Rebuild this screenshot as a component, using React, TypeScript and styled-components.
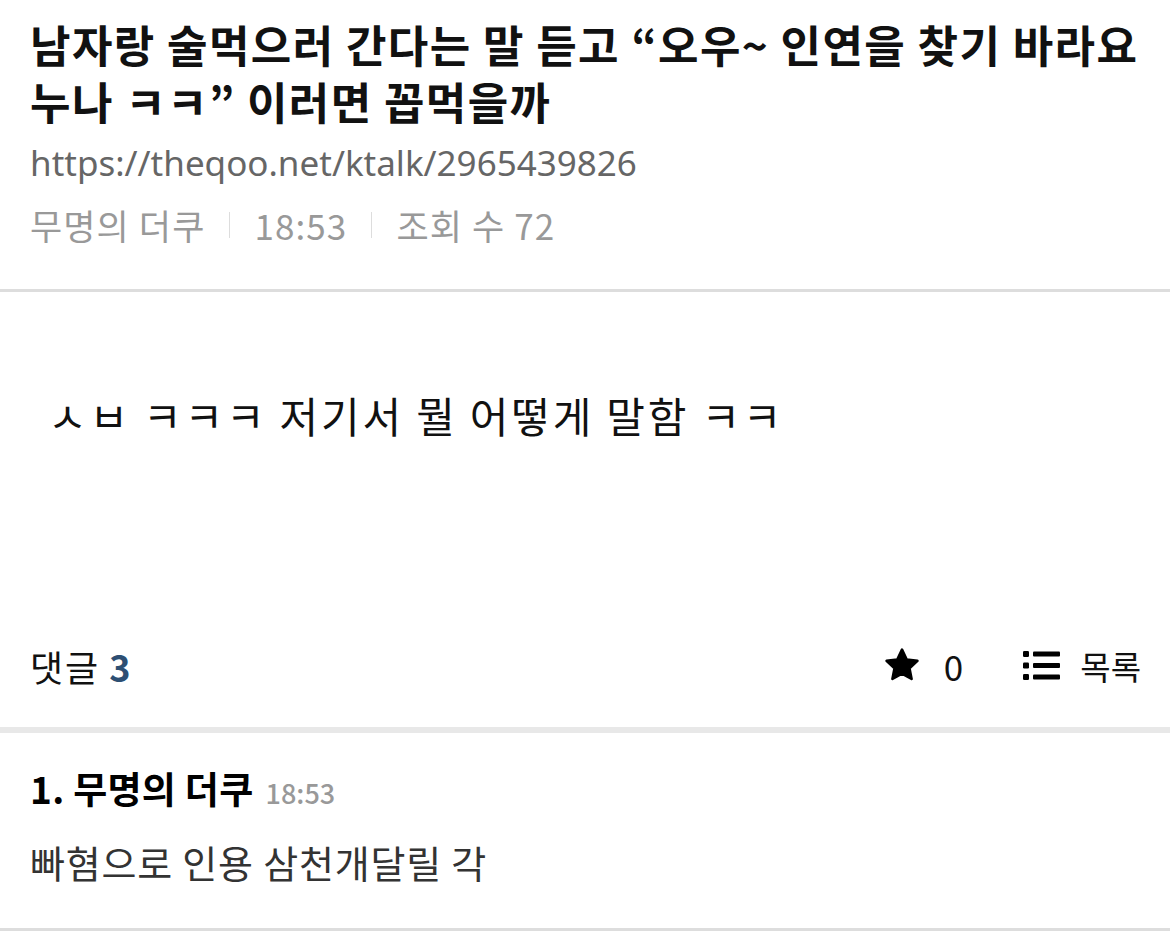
import React from "react";
import styled, { createGlobalStyle } from "styled-components";

const Global = createGlobalStyle`
  html, body { margin: 0; padding: 0; background: #fff; }
  body { font-family: "Noto Sans CJK KR", "Noto Sans", sans-serif; color: #000; }
  * { box-sizing: border-box; }
`;

const Page = styled.div`
  width: 1170px;
  background: #fff;
`;

const Header = styled.header`
  padding: 16px 20px 0 30px;
  height: 289px;
`;

const Title = styled.h1`
  margin: 0;
  font-size: 44px;
  font-weight: 700;
  line-height: 57px;
  letter-spacing: 1.4px;
  color: #111;
`;

const Url = styled.div`
  margin-top: 8px;
  font-size: 35px;
  line-height: 50px;
  color: #666;
  font-family: "Noto Sans", "Noto Sans CJK KR", sans-serif;
`;

const Meta = styled.div`
  margin-top: 12px;
  display: flex;
  align-items: center;
  font-size: 35px;
  line-height: 50px;
  letter-spacing: 1.1px;
  color: #999;
`;

const Sep = styled.span`
  display: inline-block;
  width: 1px;
  height: 26px;
  background: #ddd;
  margin: 0 24px;
`;

const Divider = styled.div<{ $h: number; $c: string }>`
  height: ${(p) => p.$h}px;
  background: ${(p) => p.$c};
`;

const Body = styled.div`
  height: 320px;
  padding: 96px 0 0 48px;
  font-size: 42px;
  line-height: 54px;
  letter-spacing: 2.8px;
  color: #111;
`;

const Bar = styled.div`
  height: 115px;
  padding: 0 29px 8px 30px;
  display: flex;
  align-items: center;
  justify-content: space-between;
`;

const CountLabel = styled.div`
  font-size: 36px;
  letter-spacing: 2px;
  color: #111;
`;

const CountNum = styled.span`
  color: #2d4f73;
  font-weight: 700;
  margin-left: 9px;
`;

const Actions = styled.div`
  display: flex;
  align-items: center;
`;

const Action = styled.div<{ $gap: number }>`
  display: flex;
  align-items: center;
  gap: ${(p) => p.$gap}px;
  font-size: 33px;
  color: #111;
  margin-left: 60px;
`;

const Zero = styled.span`
  font-size: 35px;
`;

const Comment = styled.div`
  height: 195px;
  padding: 30px 30px 0 30px;
`;

const CommentHead = styled.div`
  display: flex;
  align-items: baseline;
  font-size: 37px;
  line-height: 50px;
  font-weight: 700;
  letter-spacing: 0.3px;
  color: #000;
`;

const CommentTime = styled.span`
  font-size: 27px;
  font-weight: 500;
  letter-spacing: 0;
  color: #999;
  margin-left: 12px;
`;

const CommentText = styled.div`
  margin-top: 19px;
  font-size: 38px;
  line-height: 50px;
  letter-spacing: 0.8px;
  color: #333;
`;

const Star = () => (
  <svg width="40" height="39" viewBox="0 0 24 24">
    <path
      d="M12 2.2l2.9 6.1 6.6.8-4.9 4.6 1.3 6.6L12 17l-5.9 3.3 1.3-6.6-4.9-4.6 6.6-.8z"
      fill="#000"
      stroke="#000"
      strokeWidth="1.6"
      strokeLinejoin="round"
    />
  </svg>
);

const ListIcon = () => (
  <svg width="37" height="29" viewBox="0 0 37 29">
    <rect x="0" y="0" width="6" height="6" rx="1.2" fill="#000" />
    <rect x="0" y="11.5" width="6" height="6" rx="1.2" fill="#000" />
    <rect x="0" y="23" width="6" height="6" rx="1.2" fill="#000" />
    <rect x="10" y="0.5" width="27" height="5" rx="1" fill="#000" />
    <rect x="10" y="12" width="27" height="5" rx="1" fill="#000" />
    <rect x="10" y="23.5" width="27" height="5" rx="1" fill="#000" />
  </svg>
);

export default function App() {
  return (
    <Page>
      <Global />
      <Header>
        <Title>
          남자랑 술먹으러 간다는 말 듣고 “오우~ 인연을 찾기 바라요
          <br />
          누나 ㅋㅋ” 이러면 꼽먹을까
        </Title>
        <Url>https://theqoo.net/ktalk/2965439826</Url>
        <Meta>
          <span>무명의 더쿠</span>
          <Sep />
          <span>18:53</span>
          <Sep />
          <span>조회 수 72</span>
        </Meta>
      </Header>
      <Divider $h={3} $c="#dddddd" />
      <Body>ㅅㅂ ㅋㅋㅋ 저기서 뭘 어떻게 말함 ㅋㅋ</Body>
      <Bar>
        <CountLabel>
          댓글<CountNum>3</CountNum>
        </CountLabel>
        <Actions>
          <Action $gap={22}>
            <Star />
            <Zero>0</Zero>
          </Action>
          <Action $gap={20}>
            <ListIcon />
            <span>목록</span>
          </Action>
        </Actions>
      </Bar>
      <Divider $h={6} $c="#e8e8e8" />
      <Comment>
        <CommentHead>
          1. 무명의 더쿠<CommentTime>18:53</CommentTime>
        </CommentHead>
        <CommentText>빠혐으로 인용 삼천개달릴 각</CommentText>
      </Comment>
      <Divider $h={3} $c="#dddddd" />
    </Page>
  );
}
